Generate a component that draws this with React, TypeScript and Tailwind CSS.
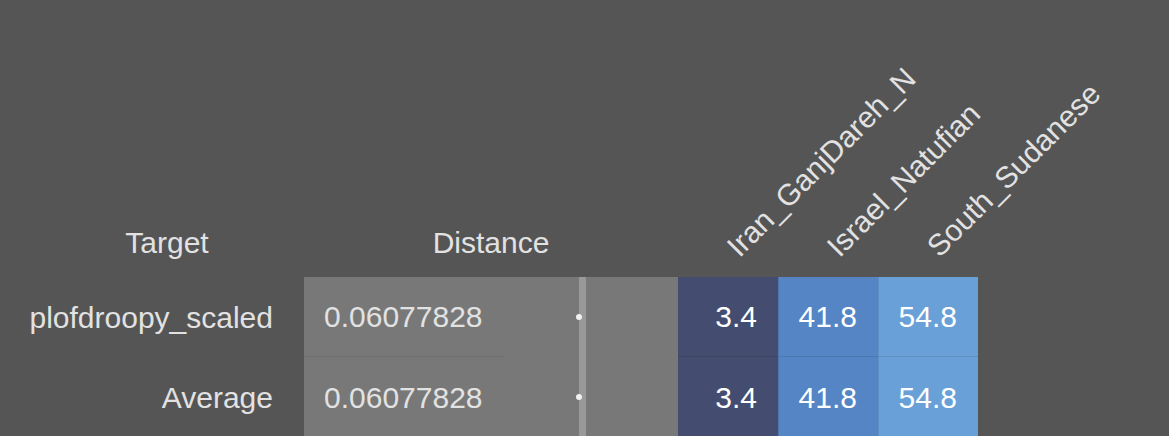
const columns = [
  { name: "Iran_GanjDareh_N", bg: "bg-[#444d70]" },
  { name: "Israel_Natufian", bg: "bg-[#5585c4]" },
  { name: "South_Sudanese", bg: "bg-[#68a0d7]" },
];

const rows = [
  { target: "plofdroopy_scaled", distance: "0.06077828", values: ["3.4", "41.8", "54.8"] },
  { target: "Average", distance: "0.06077828", values: ["3.4", "41.8", "54.8"] },
];

const App = () => {
  return (
    <div className="w-[1169px] h-[436px] overflow-hidden bg-[#555555] font-['Liberation_Sans',Arial,sans-serif] text-[30px] text-[#e2e2e2]">
      <div className="pl-[30px]">
        {/* header */}
        <div className="flex items-end h-[277px]">
          <div className="w-[274px] text-center pb-[17px] leading-[34px]">Target</div>
          <div className="w-[374px] text-center pb-[17px] leading-[34px]">Distance</div>
          {columns.map((c) => (
            <div key={c.name} className="relative w-[100px] h-full">
              <span className="absolute left-[65px] bottom-[15px] whitespace-nowrap leading-none origin-bottom-left -rotate-45">
                {c.name}
              </span>
            </div>
          ))}
        </div>

        {/* rows */}
        {rows.map((r, i) => (
          <div key={r.target} className="flex h-[80px]">
            <div className="w-[274px] flex items-center justify-end pr-[31px]">{r.target}</div>
            <div className="w-[374px] flex bg-[#787878]">
              <div className="w-[275px] flex items-center relative">
                <div
                  className={
                    "w-[200px] h-full flex items-center pl-[20px] " +
                    (i === 0 ? "border-b border-[#6e6e6e]" : "")
                  }
                >
                  {r.distance}
                </div>
                <span className="absolute right-[-3px] top-[37px] w-[6px] h-[6px] rounded-full bg-[#f0f0f0]" />
              </div>
              <div className="w-[7px] bg-[#999999]" />
              <div className="flex-1" />
            </div>
            {columns.map((c, j) => (
              <div
                key={c.name}
                className={
                  "w-[100px] flex items-center justify-end pr-[21px] text-white " +
                  c.bg +
                  (j > 0 ? " border-l border-black/10" : "") +
                  (i === 0 ? " border-b border-black/10" : "")
                }
              >
                {r.values[j]}
              </div>
            ))}
          </div>
        ))}
      </div>
    </div>
  );
};

export default App;
